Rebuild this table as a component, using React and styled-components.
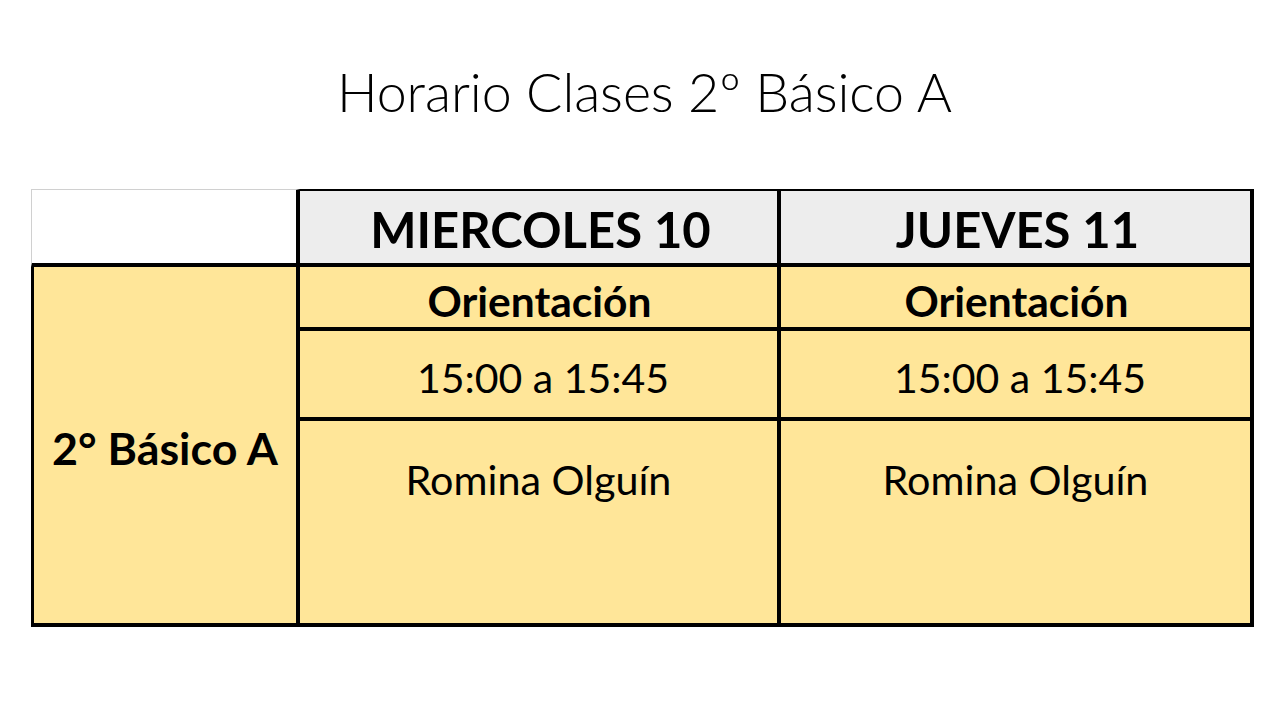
import styled, { createGlobalStyle } from "styled-components";

const GlobalStyle = createGlobalStyle`
  html, body {
    margin: 0;
    padding: 0;
    background: #ffffff;
  }
  body {
    font-family: Lato, "Open Sans", sans-serif;
    color: #000000;
  }
`;

const Slide = styled.div`
  width: 1280px;
  height: 720px;
  display: flex;
  flex-direction: column;
  padding-left: 31px;
  box-sizing: border-box;
  background: #ffffff;
`;

const Title = styled.h1`
  margin: 61px 0 0;
  height: 60px;
  padding-left: 2px;
  font-weight: 300;
  font-size: 53.8px;
  line-height: 60px;
  text-align: center;
  width: 1223px;
  letter-spacing: -0.1px;
`;

const Grid = styled.div`
  margin-top: 68px;
  display: grid;
  grid-template-columns: 269px 481px 473px;
  grid-template-rows: 78px 64px 90px 206px;
  width: 1223px;
`;

const Cell = styled.div`
  box-sizing: border-box;
  display: flex;
  justify-content: center;
  align-items: ${(p) => (p.$top ? "flex-start" : "center")};
  padding-top: ${(p) => (p.$top ? "33px" : "5px")};
  background: ${(p) => (p.$head ? "#ededed" : "#ffe699")};
  border-right: 4px solid #000;
  border-bottom: 4px solid #000;
  border-top: ${(p) => (p.$head ? "2px solid #000" : "none")};
  font-size: 41.3px;
  font-weight: 400;
`;

const Corner = styled.div`
  box-sizing: border-box;
  background: #ffffff;
  border-top: 1px solid #d0d0d0;
  border-left: 1px solid #d0d0d0;
  border-right: 4px solid #000;
  border-bottom: 4px solid #000;
`;

const DayCell = styled(Cell)`
  font-size: 49px;
  font-weight: 700;
  padding-top: 3px;
  padding-left: 4px;
`;

const GroupCell = styled(Cell)`
  border-left: 3px solid #000;
  font-size: 44.8px;
  font-weight: 700;
  padding-top: 6px;
`;

const SubjectCell = styled(Cell)`
  font-weight: 700;
  font-size: 42.5px;
  padding-top: 6px;
  padding-left: 2px;
`;

const TimeCell = styled(Cell)`
  font-size: 41px;
  padding-top: 6px;
  padding-left: 9px;
`;

const days = [
  { day: "MIERCOLES 10", subject: "Orientación", time: "15:00 a 15:45", teacher: "Romina Olguín" },
  { day: "JUEVES 11", subject: "Orientación", time: "15:00 a 15:45", teacher: "Romina Olguín" },
];

export default function App() {
  return (
    <>
      <GlobalStyle />
      <Slide>
        <Title>Horario Clases 2º Básico A</Title>
        <Grid>
          <Corner />
          {days.map((d) => (
            <DayCell key={d.day} $head>
              {d.day}
            </DayCell>
          ))}
          <GroupCell style={{ gridColumn: 1, gridRow: "2 / span 3" }}>2° Básico A</GroupCell>
          {days.map((d, i) => (
            <SubjectCell key={"s" + i} style={{ gridColumn: i + 2, gridRow: 2 }}>
              {d.subject}
            </SubjectCell>
          ))}
          {days.map((d, i) => (
            <TimeCell key={"t" + i} style={{ gridColumn: i + 2, gridRow: 3 }}>
              {d.time}
            </TimeCell>
          ))}
          {days.map((d, i) => (
            <Cell key={"n" + i} $top style={{ gridColumn: i + 2, gridRow: 4 }}>
              {d.teacher}
            </Cell>
          ))}
        </Grid>
      </Slide>
    </>
  );
}
